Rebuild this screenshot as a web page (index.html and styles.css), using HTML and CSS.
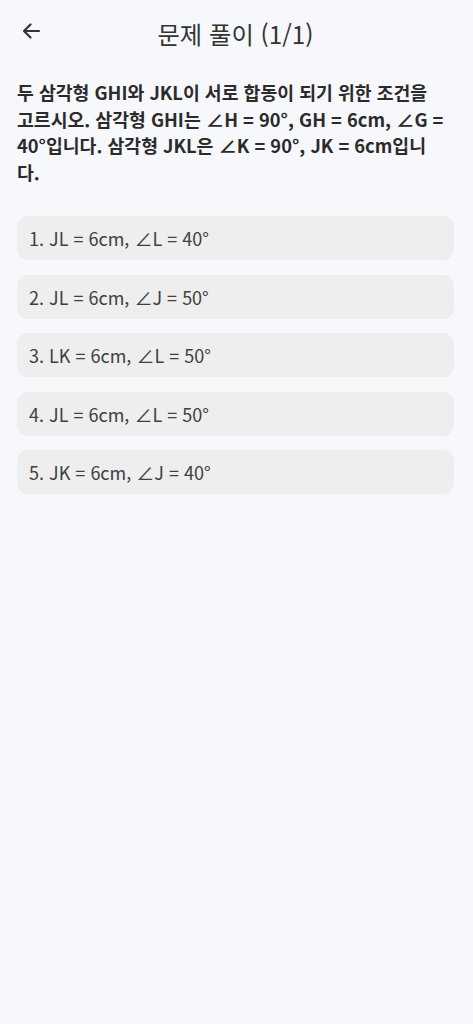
FILE: index.html
```html
<!DOCTYPE html>
<html lang="ko">
<head>
<meta charset="utf-8">
<link rel="stylesheet" href="styles.css">
</head>
<body>
<div class="page">
  <header class="topbar">
    <button class="back" aria-label="뒤로">
      <svg width="20" height="20" viewBox="0 0 20 20"><path d="M18 10H3M9.5 3.5L3 10l6.5 6.5" fill="none" stroke="#333" stroke-width="2.2" stroke-linecap="round" stroke-linejoin="round"/></svg>
    </button>
    <h1 class="title">문제 풀이 (1/1)</h1>
  </header>
  <p class="question">두 삼각형 GHI와 JKL이 서로 합동이 되기 위한 조건을<br>고르시오. 삼각형 GHI는 ∠H = 90°, GH = 6cm, ∠G =<br>40°입니다. 삼각형 JKL은 ∠K = 90°, JK = 6cm입니<br>다.</p>
  <ul class="options">
    <li class="option">1. JL = 6cm, ∠L = 40°</li>
    <li class="option">2. JL = 6cm, ∠J = 50°</li>
    <li class="option">3. LK = 6cm, ∠L = 50°</li>
    <li class="option">4. JL = 6cm, ∠L = 50°</li>
    <li class="option">5. JK = 6cm, ∠J = 40°</li>
  </ul>
</div>
</body>
</html>
```
FILE: styles.css
```css
html, body {
  margin: 0;
  padding: 0;
  background: #f7f8fc;
}
body {
  font-family: "Noto Sans CJK KR", "Noto Sans", sans-serif;
  color: #333;
  height: 1024px;
}
.page {
  padding: 0 19px 0 17px;
}
.topbar {
  position: relative;
  height: 68px;
  display: flex;
  align-items: center;
  justify-content: center;
}
.back {
  position: absolute;
  left: 4px;
  top: 21px;
  width: 20px;
  height: 20px;
  padding: 0;
  border: 0;
  background: none;
  display: flex;
}
.title {
  margin: 0;
  font-size: 24.3px;
  font-weight: 400;
  color: #333;
  position: relative;
  top: -1px;
}
.question {
  margin: 11px 0 0;
  font-size: 18.3px;
  font-weight: 700;
  line-height: 26.5px;
  color: #2b2b2b;
  white-space: nowrap;
}
.options {
  list-style: none;
  margin: 31px 0 0;
  padding: 0;
  display: flex;
  flex-direction: column;
  gap: 14.5px;
}
.option {
  background: #eeeeee;
  border-radius: 11px;
  height: 44px;
  display: flex;
  align-items: center;
  padding-left: 12px;
  font-size: 18px;
  color: #404040;
}
```
